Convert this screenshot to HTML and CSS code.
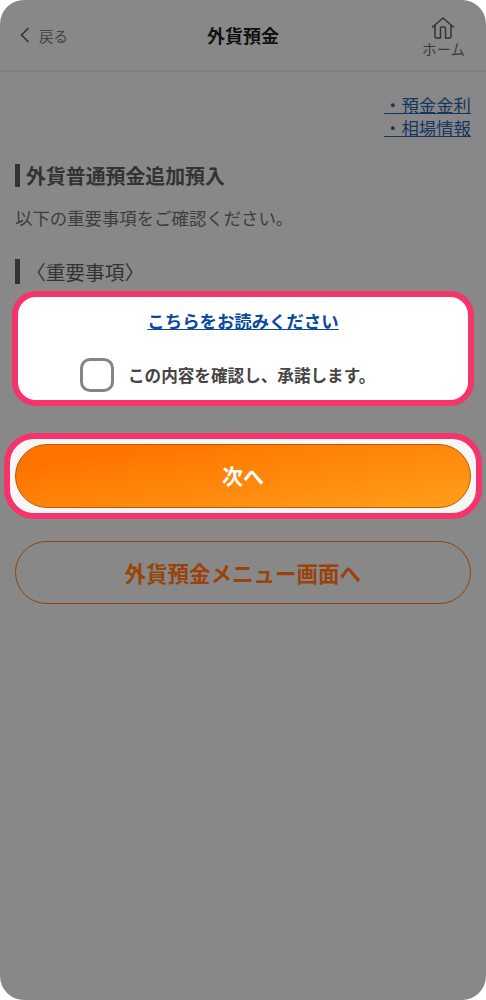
FILE: index.html
```html
<!DOCTYPE html>
<html lang="ja">
<head>
<meta charset="utf-8">
<title>外貨預金</title>
<link rel="stylesheet" href="styles.css">
</head>
<body>
<div class="screen">
  <header class="header">
    <a class="back">
      <svg class="chevron" viewBox="0 0 10 16" width="10" height="16"><path d="M8.5 1 L1.5 8 L8.5 15" fill="none" stroke="#333" stroke-width="1.6"/></svg>
      <span>戻る</span>
    </a>
    <h1 class="title">外貨預金</h1>
    <a class="home">
      <svg class="home-icon" viewBox="0 0 24 22" width="24" height="22"><path d="M1 10.5 L12 1 L23 10.5 M4 8.5 V19.5 Q4 21 5.5 21 H9.5 V11.5 Q9.5 10 11 10 H13 Q14.5 10 14.5 11.5 V21 H18.5 Q20 21 20 19.5 V8.5" fill="none" stroke="#333" stroke-width="1.5" stroke-linejoin="round"/></svg>
      <span>ホーム</span>
    </a>
  </header>
  <main class="main">
    <nav class="links">
      <a>・預金金利</a>
      <a>・相場情報</a>
    </nav>
    <h2 class="heading">外貨普通預金追加預入</h2>
    <p class="lead">以下の重要事項をご確認ください。</p>
    <h3 class="heading sub">〈重要事項〉</h3>
    <section class="notice">
      <a class="read">こちらをお読みください</a>
      <label class="agree">
        <span class="check"></span>
        <span>この内容を確認し、承諾します。</span>
      </label>
    </section>
    <div class="next-wrap">
      <a class="btn primary">次へ</a>
    </div>
    <a class="btn secondary">外貨預金メニュー画面へ</a>
  </main>
</div>
</body>
</html>
```
FILE: styles.css
```css
* { box-sizing: border-box; }
html, body { margin: 0; padding: 0; background: #fff; }
body { font-family: "Noto Sans CJK JP", "Noto Sans", sans-serif; }
.screen {
  width: 486px;
  height: 1000px;
  background: #888888;
  border-radius: 24px;
  overflow: hidden;
}
.header {
  height: 72px;
  border-bottom: 2px solid #7e7e7e;
  display: grid;
  grid-template-columns: 1fr auto 1fr;
  align-items: center;
  padding: 0 20px;
}
.back {
  display: flex;
  align-items: center;
  gap: 9px;
  font-size: 14.5px;
  color: #444;
}
.title {
  margin: 0;
  font-size: 18px;
  line-height: 26px;
  font-weight: 700;
  color: #111;
}
.home {
  justify-self: end;
  margin-right: 1px;
  display: flex;
  flex-direction: column;
  align-items: center;
  font-size: 14.5px;
  line-height: 20px;
  color: #3d3d3d;
  padding-top: 4px;
}
.home-icon { display: block; margin: 1px 0 0; }
.main { padding: 21px 15px 0; }
.links {
  display: flex;
  flex-direction: column;
  align-items: flex-end;
  font-size: 17.4px;
  line-height: 23px;
  color: #17365f;
}
.links a { text-decoration: underline; }
.heading {
  margin: 25px 0 0;
  border-left: 5px solid #333;
  padding-left: 6px;
  font-size: 19.9px;
  line-height: 23px;
  font-weight: 700;
  color: #333;
}
.lead {
  margin: 19px 0 0;
  font-size: 17.4px;
  line-height: 24px;
  color: #3d3d3d;
}
.sub {
  margin-top: 29px;
  padding-left: 6px;
  line-height: 25px;
  font-size: 19.7px;
  font-weight: 400;
}
.notice {
  margin: 7px -3px 0;
  height: 115px;
  border: 6px solid #f5346b;
  border-radius: 24px;
  background: #fff;
  display: flex;
  flex-direction: column;
  align-items: center;
  padding-top: 12px;
}
.read {
  font-size: 17.4px;
  line-height: 24px;
  font-weight: 700;
  color: #0a4a9e;
  text-decoration: underline;
}
.agree {
  margin-top: 25px;
  align-self: flex-start;
  margin-left: 62px;
  display: flex;
  align-items: center;
  gap: 14px;
  font-size: 16.6px;
  font-weight: 700;
  color: #444;
}
.check {
  width: 34px;
  height: 34px;
  border: 3px solid #858585;
  border-radius: 10px;
  background: #fff;
}
.next-wrap {
  margin: 27px -11px 0;
  height: 86px;
  border: 6px solid #f5346b;
  border-radius: 30px;
  background: #f6f6f6;
  padding: 5px 5px;
}
.btn {
  display: flex;
  align-items: center;
  justify-content: center;
  border-radius: 32px;
  font-weight: 700;
}
.primary {
  height: 64px;
  padding-bottom: 3px;
  border: 1px solid #b85c00;
  background: linear-gradient(170deg, #ff7300 15%, #ff9f1a 100%);
  color: #fff;
  font-size: 21px;
}
.secondary {
  margin: 22px 0 0 -0.5px;
  height: 63px;
  border: 1.5px solid #8e4208;
  color: #99430a;
  font-size: 21.5px;
}
```
